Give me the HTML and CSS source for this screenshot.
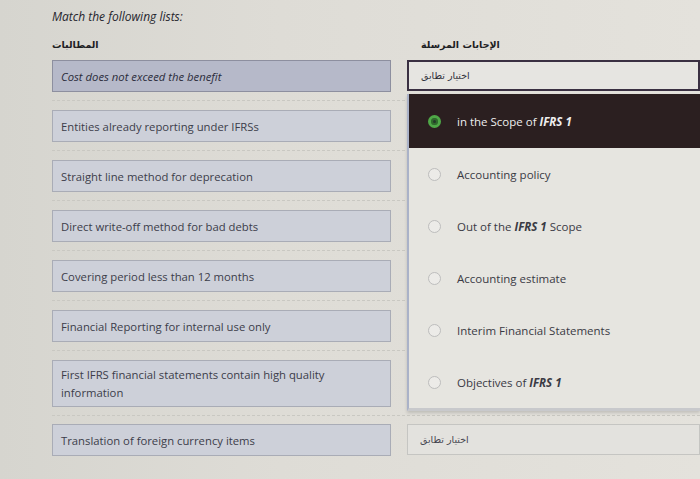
FILE: index.html
```html
<!DOCTYPE html>
<html lang="en">
<head>
<meta charset="utf-8">
<link rel="stylesheet" href="styles.css">
</head>
<body>
<div class="page">
  <p class="title">Match the following lists:</p>
  <div class="heads">
    <div class="head" dir="rtl">المطالبات</div>
    <div class="head head-right" dir="rtl">الإجابات المرسلة</div>
  </div>
  <div class="rows">
    <div class="row">
      <div class="prompt prompt-active"><em>Cost does not exceed the benefit</em></div>
      <div class="answer">
        <div class="select select-open"><span dir="rtl">اختيار تطابق</span></div>
        <ul class="menu">
          <li class="opt opt-on"><span class="radio radio-on"></span><span>in the Scope of <b><i>IFRS 1</i></b></span></li>
          <li class="opt"><span class="radio"></span><span>Accounting policy</span></li>
          <li class="opt"><span class="radio"></span><span>Out of the <b><i>IFRS 1</i></b> Scope</span></li>
          <li class="opt"><span class="radio"></span><span>Accounting estimate</span></li>
          <li class="opt"><span class="radio"></span><span>Interim Financial Statements</span></li>
          <li class="opt"><span class="radio"></span><span>Objectives of <b><i>IFRS 1</i></b></span></li>
        </ul>
      </div>
    </div>
    <div class="row"><div class="prompt">Entities already reporting under IFRSs</div><div class="answer"></div></div>
    <div class="row"><div class="prompt">Straight line method for deprecation</div><div class="answer"></div></div>
    <div class="row"><div class="prompt">Direct write-off method for bad debts</div><div class="answer"></div></div>
    <div class="row"><div class="prompt">Covering period less than 12 months</div><div class="answer"></div></div>
    <div class="row"><div class="prompt">Financial Reporting for internal use only</div><div class="answer"></div></div>
    <div class="row"><div class="prompt prompt-tall">First IFRS financial statements contain high quality information</div><div class="answer"></div></div>
    <div class="row row-last">
      <div class="prompt">Translation of foreign currency items</div>
      <div class="answer"><div class="select"><span dir="rtl">اختيار تطابق</span></div></div>
    </div>
  </div>
</div>
</body>
</html>
```

FILE: styles.css
```css
html, body {
  margin: 0;
  padding: 0;
}
body {
  width: 700px;
  height: 479px;
  overflow: hidden;
  background: linear-gradient(90deg, #d6d5cf 0%, #dedcd6 40%, #e4e2dc 100%);
  font-family: "Open Sans", "Noto Sans", sans-serif;
  color: #3b3b46;
}
.page {
  padding: 9px 0 0 52px;
}
.title {
  margin: 0;
  font-size: 12px;
  font-style: italic;
  color: #26262e;
  line-height: 16px;
}
.heads {
  display: grid;
  grid-template-columns: 339px 1fr;
  column-gap: 16px;
  margin-top: 13px;
  height: 13px;
}
.head {
  font-family: "DejaVu Sans", "Noto Sans", sans-serif;
  font-size: 9.5px;
  font-weight: bold;
  color: #1e1e24;
  direction: rtl;
  justify-self: start;
  line-height: 13px;
}
.head-right {
  padding-left: 14px;
}
.rows {
  margin-top: 0;
}
.row {
  display: grid;
  grid-template-columns: 339px 1fr;
  column-gap: 16px;
  padding: 9px 0 8px;
  border-bottom: 1px dashed #c9c8c2;
}
.row-last {
  border-bottom: none;
  padding-top: 8px;
}
.prompt {
  box-sizing: border-box;
  height: 32px;
  display: flex;
  align-items: center;
  padding: 0 8px;
  background: #cdd0d9;
  border: 1px solid #a9acb6;
  font-size: 11.3px;
  color: #3c3d4a;
}
.prompt-active {
  background: #b6b9c9;
  border-color: #8d8f9f;
  color: #2c2d3c;
}
.prompt-tall {
  height: 47px;
  line-height: 18px;
  padding-right: 40px;
}
.answer {
  position: relative;
}
.select {
  box-sizing: border-box;
  height: 31px;
  display: flex;
  align-items: center;
  justify-content: flex-start;
  padding: 0 12px;
  background: #e3e2de;
  border: 1px solid #c5c5c2;
  font-family: "DejaVu Sans", "Noto Sans", sans-serif;
  font-size: 9.5px;
  color: #45454f;
}
.select-open {
  border: 2px solid #3a3042;
  background: #e6e5e1;
  color: #30303a;
}
.menu {
  position: absolute;
  left: 0;
  right: 0;
  top: 34px;
  margin: 0;
  padding: 0;
  list-style: none;
  background: #e6e5e0;
  border-left: 2px solid #aab2c8;
  border-bottom: 3px solid #c8c9cc;
  box-shadow: 0 2px 3px rgba(0,0,0,0.15);
  z-index: 2;
}
.opt {
  height: 52px;
  display: flex;
  align-items: center;
  gap: 16px;
  padding-left: 19px;
  font-size: 11.5px;
  color: #3a3a44;
}
.opt-on {
  height: 54px;
  background: #2b1f20;
  color: #eeeeee;
}
.opt b i {
  font-weight: 700;
}
.radio {
  box-sizing: border-box;
  width: 13px;
  height: 13px;
  border-radius: 50%;
  border: 1px solid #bdbdbd;
  background: #ecebe8;
  flex: none;
}
.radio-on {
  border: 3px solid #4fa847;
  background: #24382a;
  box-shadow: inset 0 0 0 2px #2f6a2c;
}
```
